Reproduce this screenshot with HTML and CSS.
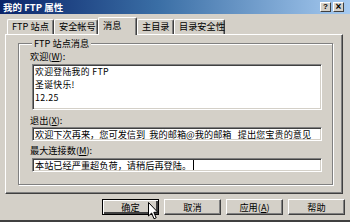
FILE: index.html
```html
<!DOCTYPE html>
<html lang="zh-CN">
<head>
<meta charset="utf-8">
<title>我的 FTP 属性</title>
<link rel="stylesheet" href="styles.css">
</head>
<body>
<div class="window">
  <div class="titlebar">
    <span class="title">我的 FTP 属性</span>
    <div class="caption-btns">
      <span class="cbtn">?</span>
      <span class="cbtn cclose">×</span>
    </div>
  </div>
  <div class="tabs">
    <div class="tab t1">FTP 站点</div>
    <div class="tab t2">安全帐号</div>
    <div class="tab t3 active">消息</div>
    <div class="tab t4">主目录</div>
    <div class="tab t5">目录安全性</div>
  </div>
  <div class="panel">
    <div class="group">
      <div class="group-title">FTP 站点消息</div>
      <div class="label l1">欢迎(<u>W</u>):</div>
      <div class="field textarea">
        <div class="tline">欢迎登陆我的 FTP</div>
        <div class="tline">圣诞快乐!</div>
        <div class="tline">12.25</div>
      </div>
      <div class="label l2">退出(<u>X</u>):</div>
      <div class="field input">欢迎下次再来，您可发信到&nbsp;&nbsp;我的邮箱@我的邮箱&nbsp;&nbsp;&nbsp;提出您宝贵的意见</div>
      <div class="label l3">最大连接数(<u>M</u>):</div>
      <div class="field input i2">本站已经严重超负荷，请稍后再登陆。<span class="caret"></span></div>
    </div>
  </div>
  <div class="buttons">
    <div class="btn default"><span>确定</span></div>
    <div class="btn">取消</div>
    <div class="btn">应用(<u>A</u>)</div>
    <div class="btn">帮助</div>
  </div>
  <svg class="cursor" width="11" height="18" viewBox="0 0 11 18">
    <path d="M0.5 0.5 L0.5 14 L3.6 11 L6 16.8 L8.2 15.8 L5.8 10.3 L9.8 10.3 Z" fill="#fff" stroke="#000" stroke-width="1"/>
  </svg>
</div>
</body>
</html>
```

FILE: styles.css
```css
* { box-sizing: border-box; }
html, body { margin: 0; padding: 0; }
body {
  width: 350px;
  height: 222px;
  overflow: hidden;
  background: #d4d0c8;
  font-family: "Noto Sans CJK SC", "Liberation Sans", sans-serif;
  font-size: 9.2px;
  color: #000;
}
.window {
  position: relative;
  width: 350px;
  height: 222px;
  background: #d4d0c8;
  display: flex;
  flex-direction: column;
  border-bottom: 2px solid #404040;
}
.titlebar {
  height: 14px;
  flex: none;
  display: flex;
  align-items: center;
  justify-content: space-between;
  padding: 0 6px 0 3px;
  background: linear-gradient(to right, #0a246a 0%, #3a6ea5 45%, #a6caf0 100%);
}
.title {
  color: #fff;
  font-weight: bold;
  font-size: 9.5px;
  line-height: 12px;
  white-space: pre;
}
.caption-btns { display: flex; gap: 2px; }
.cbtn {
  width: 11px;
  height: 10px;
  background: #d4d0c8;
  border-top: 1px solid #fff;
  border-left: 1px solid #fff;
  border-right: 1px solid #404040;
  border-bottom: 1px solid #404040;
  font-family: "Liberation Sans", sans-serif;
  font-size: 8px;
  font-weight: bold;
  line-height: 8px;
  text-align: center;
}
.cclose { font-size: 10px; line-height: 7px; }

.tabs {
  flex: none;
  height: 17px;
  margin-top: 3px;
  padding-left: 7px;
  display: flex;
  align-items: flex-end;
}
.tab {
  height: 15px;
  line-height: 13px;
  padding-left: 4px;
  border-top: 1px solid #fff;
  border-left: 1px solid #fff;
  border-right: 1px solid #404040;
  border-radius: 2px 2px 0 0;
  box-shadow: inset -1px 0 0 #808080;
  white-space: pre;
}
.t1 { width: 47px; }
.t2 { width: 44px; }
.t3 { width: 39px; }
.t4 { width: 37px; }
.t5 { width: 51px; }
.tab.active {
  position: relative;
  z-index: 1;
  height: 18px;
  margin-bottom: -1px;
  line-height: 15px;
  background: #d4d0c8;
}

.panel {
  flex: none;
  height: 160px;
  margin: 0 7px 0 5px;
  padding: 8px 9px 0 12px;
  border-top: 1px solid #fff;
  border-left: 1px solid #fff;
  border-right: 1px solid #404040;
  border-bottom: 1px solid #404040;
  box-shadow: inset -1px -1px 0 #808080;
}
.group {
  height: 142px;
  border: 1px solid #808080;
  box-shadow: inset 1px 1px 0 #fff, 1px 1px 0 #fff;
  padding: 0 9px 0 11px;
}
.group-title {
  width: fit-content;
  margin: -7px 0 0 2px;
  padding: 0 2px;
  background: #d4d0c8;
  line-height: 12px;
  white-space: pre;
}
.label {
  line-height: 12px;
  white-space: pre;
}
.l1 { line-height: 13px; margin-top: 1px; }
.l2 { margin-top: 4px; }
.l3 { margin-top: 3px; }
.field {
  margin-left: 2px;
  width: 290px;
  background: #fff;
  border-top: 1px solid #808080;
  border-left: 1px solid #808080;
  border-right: 1px solid #fff;
  border-bottom: 1px solid #fff;
  box-shadow: inset 1px 1px 0 #404040, inset -1px -1px 0 #d4d0c8;
  white-space: pre;
  overflow: hidden;
}
.textarea {
  margin-top: 1px;
  height: 46px;
  padding: 1px 0 0 2px;
  white-space: normal;
}
.tline {
  font-size: 8.8px;
  line-height: 12.75px;
  letter-spacing: 0.35px;
  white-space: pre;
}
.input {
  margin-top: 1px;
  height: 14px;
  padding: 0 0 0 2px;
  line-height: 12px;
}
.i2 { margin-top: 2px; }
.caret {
  display: inline-block;
  width: 1px;
  height: 10px;
  margin-left: 2px;
  background: #000;
  vertical-align: -1px;
}

.buttons {
  flex: none;
  margin-top: 5px;
  padding-right: 5px;
  display: flex;
  justify-content: flex-end;
  gap: 5px;
}
.btn {
  width: 57px;
  height: 16px;
  line-height: 14px;
  text-align: center;
  border-top: 1px solid #fff;
  border-left: 1px solid #fff;
  border-right: 1px solid #404040;
  border-bottom: 1px solid #404040;
  box-shadow: inset -1px -1px 0 #808080;
}
.btn.default {
  border: 1px solid #000;
  box-shadow: inset 1px 1px 0 #fff, inset -2px -2px 0 #404040;
}
.cursor {
  position: absolute;
  left: 148px;
  top: 202px;
}
```
